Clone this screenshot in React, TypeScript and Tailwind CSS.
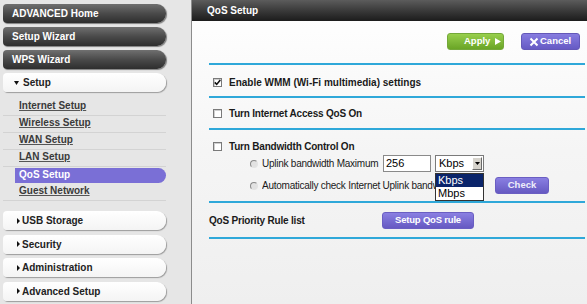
import React from "react";

const subItems = ["Internet Setup", "Wireless Setup", "WAN Setup", "LAN Setup", "QoS Setup", "Guest Network"];

function DarkBtn({ label }: { label: string }) {
  return (
    <div className="h-[19px] w-[163px] flex items-center pl-[9px] rounded-l-[4px] rounded-r-[9px] bg-linear-to-b from-[#707070] via-[#4a4a4a] to-[#2e2e2e] shadow-[1px_1px_1px_rgba(0,0,0,0.45)] text-white font-bold text-[10px]">
      {label}
    </div>
  );
}

function LightBtn({ label, open }: { label: string; open?: boolean }) {
  return (
    <div
      className={
        "h-[19px] w-[163px] flex items-center rounded-l-[4px] rounded-r-[9px] bg-linear-to-b from-white to-[#f4f4f4] shadow-[1px_1px_1px_#9c9c9c] text-[#222] font-bold text-[10px] " +
        (open ? "pl-[11px]" : "pl-[14px]")
      }
    >
      {open ? (
        <svg width="5" height="4" viewBox="0 0 5 4" className="mr-[4px]">
          <path d="M0 0 L5 0 L2.5 4 Z" fill="#111" />
        </svg>
      ) : (
        <svg width="3" height="6" viewBox="0 0 3 6" className="mr-[2px]">
          <path d="M0 0 L3 3 L0 6 Z" fill="#111" />
        </svg>
      )}
      {label}
    </div>
  );
}

function Sidebar() {
  return (
    <div className="w-[191px] shrink-0 pl-[3px] pt-[4px] bg-[#e6e6e6] flex flex-col">
      <div className="flex flex-col gap-[4px]">
        <DarkBtn label="ADVANCED Home" />
        <DarkBtn label="Setup Wizard" />
        <DarkBtn label="WPS Wizard" />
        <LightBtn label="Setup" open />
      </div>
      <div className="mt-[7px] flex flex-col w-[163px]">
        {subItems.map((s) => {
          const active = s === "QoS Setup";
          return (
            <div
              key={s}
              className={"h-[17px] flex items-center border-b " + (active ? "border-transparent" : "border-[#d3d3d3] pl-[16px] pb-[3px]")}
            >
              {active ? (
                <div className="ml-[12px] h-[15px] flex-1 flex items-center pl-[4px] rounded-r-[8px] bg-[#7a6fd6] text-white font-bold text-[10px] leading-none">
                  {s}
                </div>
              ) : (
                <span className="text-[10px] font-bold text-[#3a3a3a] underline underline-offset-[1px] decoration-[#555] leading-none">
                  {s}
                </span>
              )}
            </div>
          );
        })}
      </div>
      <div className="mt-[10px] flex flex-col gap-[4.6px]">
        <LightBtn label="USB Storage" />
        <LightBtn label="Security" />
        <LightBtn label="Administration" />
        <LightBtn label="Advanced Setup" />
      </div>
    </div>
  );
}

function Line() {
  return <div className="h-[2px] bg-[#2fa8d9]" />;
}

function Checkbox({ checked }: { checked?: boolean }) {
  return (
    <div className="w-[9px] h-[9px] shrink-0 border border-[#7a7a7a] bg-white flex items-center justify-center shadow-[inset_1px_1px_0_#cfcfcf]">
      {checked && (
        <svg width="7" height="7" viewBox="0 0 7 7">
          <path d="M0.8 3.4 L2.7 5.4 L6.3 1" fill="none" stroke="#111" strokeWidth="1.6" />
        </svg>
      )}
    </div>
  );
}

function Radio() {
  return (
    <div className="w-[8px] h-[8px] shrink-0 rounded-full border border-t-[#8a8a8a] border-l-[#8a8a8a] border-r-[#e4e4e4] border-b-[#e4e4e4] bg-[#e2e2e2]" />
  );
}

function Content() {
  return (
    <div className="flex-1 border-l border-[#8c8c8c] flex flex-col bg-linear-to-b from-white via-[#f5f5f5] to-[#efefef]">
      <div className="h-[21px] shrink-0 bg-linear-to-b from-[#5c5c5c] to-[#1c1c1c] text-white font-bold text-[10px] pl-[15px] flex items-center">
        QoS Setup
      </div>
      <div className="pl-[17px] pr-[2px]">
        <div className="flex justify-end gap-[17px] pr-[5px] mt-[12px] mb-[13px]">
          <div className="w-[57px] h-[17px] flex items-center pl-[16px] rounded-[3px] border border-[#74a83a] bg-linear-to-b from-[#98cf4c] to-[#6aa526] text-white font-bold text-[9.5px]">
            Apply
            <svg width="6" height="7" viewBox="0 0 6 7" className="ml-[5px]">
              <path d="M0 0 L6 3.5 L0 7 Z" fill="#fff" />
            </svg>
          </div>
          <div className="w-[59px] h-[17px] flex items-center pl-[7px] rounded-[3px] border border-[#6458b8] bg-linear-to-b from-[#877ce0] to-[#665ac4] text-white font-bold text-[9.5px]">
            <svg width="10" height="10" viewBox="0 0 10 10" className="mr-[1px]">
              <path d="M1.5 1.5 L8.5 8.5 M8.5 1.5 L1.5 8.5" stroke="#fff" strokeWidth="2" />
            </svg>
            Cancel
          </div>
        </div>
        <Line />
        <div className="h-[31px] pt-[3px] flex items-center pl-[4px]">
          <Checkbox checked />
          <span className="ml-[7px] text-[10px] font-bold text-[#1a1a1a]">Enable WMM (Wi-Fi multimedia) settings</span>
        </div>
        <Line />
        <div className="h-[30px] flex items-center pl-[4px]">
          <Checkbox />
          <span className="ml-[7px] text-[10px] font-bold text-[#1a1a1a] tracking-[-0.2px]">Turn Internet Access QoS On</span>
        </div>
        <Line />
        <div className="pt-[10px] pb-[7px]">
          <div className="h-[13px] flex items-center pl-[4px]">
            <Checkbox />
            <span className="ml-[7px] text-[10px] font-bold text-[#1a1a1a] tracking-[-0.2px]">Turn Bandwidth Control On</span>
          </div>
          <div className="mt-[2px] h-[17px] flex items-center pl-[41px]">
            <Radio />
            <span className="ml-[4px] w-[121px] text-[10px] text-[#1a1a1a] tracking-[-0.25px] whitespace-nowrap">Uplink bandwidth Maximum</span>
            <div className="w-[48px] h-[17px] border border-[#8a8a8a] bg-white text-[11px] text-black pl-[2px] leading-[15px]">256</div>
            <div className="relative ml-[4px] w-[49px] h-[17px] border border-[#7a7a7a] bg-white flex items-center">
              <span className="pl-[3px] text-[11px] text-black flex-1">Kbps</span>
              <div className="w-[10px] h-[13px] mr-[1px] bg-[#d6d3cc] border border-t-white border-l-white border-r-[#6a6a6a] border-b-[#6a6a6a] flex items-center justify-center">
                <svg width="5" height="3" viewBox="0 0 5 3">
                  <path d="M0 0 L5 0 L2.5 3 Z" fill="#000" />
                </svg>
              </div>
              <div className="absolute z-10 left-[-1px] top-[17px] w-[49px] border border-[#333] bg-white text-[11px]">
                <div className="h-[13px] leading-[13px] pl-[2px] bg-[#0a246a] text-white">Kbps</div>
                <div className="h-[13px] leading-[13px] pl-[2px] text-black">Mbps</div>
              </div>
            </div>
          </div>
          <div className="mt-[5px] h-[17px] flex items-center pl-[41px]">
            <Radio />
            <span className="ml-[4px] w-[173px] overflow-hidden text-[10px] text-[#1a1a1a] tracking-[-0.25px] whitespace-nowrap">
              Automatically check Internet Uplink bandwidth
            </span>
            <div className="ml-[60px] w-[54px] h-[17px] flex items-center justify-center rounded-[3px] border border-[#6a5ec2] bg-linear-to-b from-[#8a7fe2] to-[#6659c2] text-[#eeeefa] font-bold text-[9.5px]">
              Check
            </div>
          </div>
        </div>
        <Line />
        <div className="h-[34px] flex items-center">
          <span className="w-[173px] text-[10px] font-bold text-[#1a1a1a] tracking-[-0.2px]">QoS Priority Rule list</span>
          <div className="w-[92px] h-[17px] flex items-center justify-center rounded-[3px] border border-[#6a5ec2] bg-linear-to-b from-[#8a7fe2] to-[#6659c2] text-white font-bold text-[9.5px] tracking-[-0.2px]">
            Setup QoS rule
          </div>
        </div>
        <Line />
      </div>
    </div>
  );
}

export default function App() {
  return (
    <div className="w-[587px] h-[304px] overflow-hidden flex [font-family:'Liberation_Sans',Arial,sans-serif]">
      <Sidebar />
      <Content />
    </div>
  );
}
